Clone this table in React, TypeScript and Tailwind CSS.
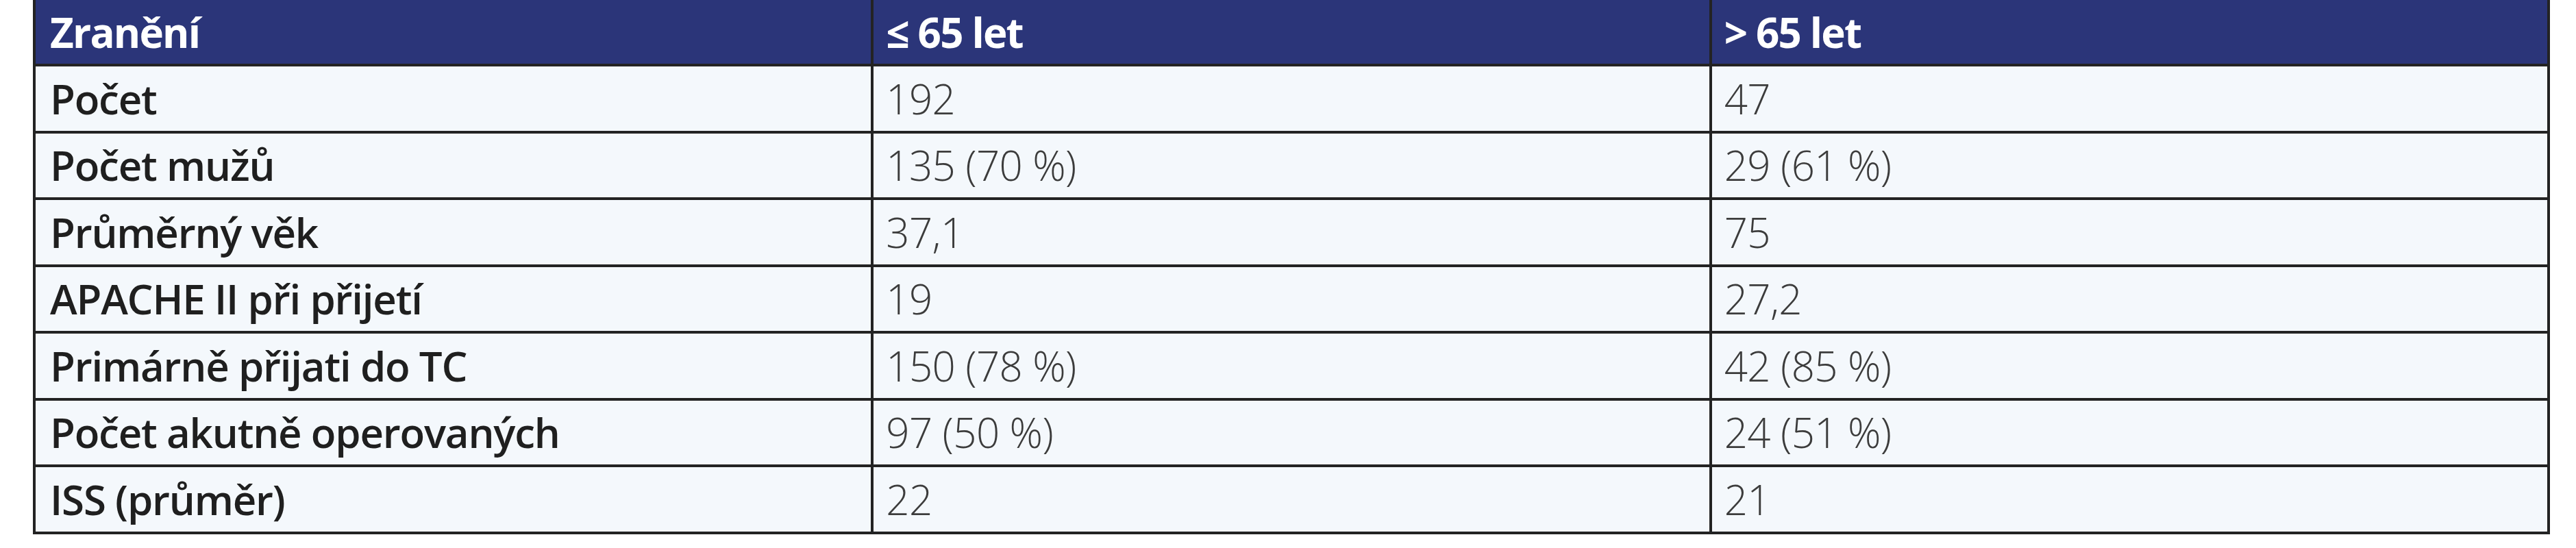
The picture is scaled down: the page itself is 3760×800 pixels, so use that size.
const rows: [string, string, string][] = [
  ['Počet', '192', '47'],
  ['Počet mužů', '135 (70 %)', '29 (61 %)'],
  ['Průměrný věk', '37,1', '75'],
  ['APACHE II při přijetí', '19', '27,2'],
  ['Primárně přijati do TC', '150 (78 %)', '42 (85 %)'],
  ['Počet akutně operovaných', '97 (50 %)', '24 (51 %)'],
  ['ISS (průměr)', '22', '21'],
];

export default function App() {
  return (
    <div className="w-[3760px] h-[800px] bg-white pl-[48px] font-['Open_Sans',sans-serif]">
      <table className="w-[3674px] border-collapse table-fixed">
        <thead>
          <tr className="bg-[#2b3579] text-white h-[95px]">
            <th className="border-4 border-t-0 border-[#232323] pl-[21px] text-left font-bold text-[60px] tracking-[-0.03em]">Zranění</th>
            <th className="border-4 border-t-0 border-[#232323] pl-[18px] text-left font-bold text-[60px] tracking-[-0.03em]">≤ 65 let</th>
            <th className="border-4 border-t-0 border-[#232323] pl-[18px] text-left font-bold text-[60px] tracking-[-0.03em]">&gt; 65 let</th>
          </tr>
        </thead>
        <tbody>
          {rows.map(r => (
            <tr key={r[0]} className="bg-[#f4f8fc] h-[97.5px]">
              <td className="border-4 border-[#232323] pl-[21px] text-[60px] font-semibold text-[#1f1f1f] tracking-[-0.02em]">{r[0]}</td>
              <td className="border-4 border-[#232323] pl-[18px] text-[60px] font-light text-[#3c3c3c] tracking-[-0.01em]">{r[1]}</td>
              <td className="border-4 border-[#232323] pl-[18px] text-[60px] font-light text-[#3c3c3c] tracking-[-0.01em]">{r[2]}</td>
            </tr>
          ))}
        </tbody>
      </table>
    </div>
  );
}
